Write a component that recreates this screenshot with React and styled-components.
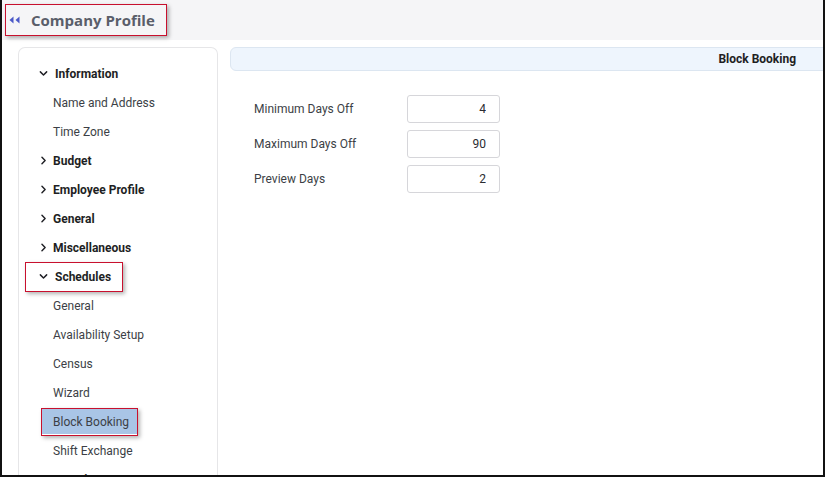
import React from 'react';
import styled, { createGlobalStyle, css } from 'styled-components';

const Global = createGlobalStyle`
  html, body { margin: 0; padding: 0; background: #fff; }
  body { font-family: Roboto, "Liberation Sans", Arial, sans-serif; }
`;

const Frame = styled.div`
  width: 825px;
  height: 477px;
  box-sizing: border-box;
  border-left: 2px solid #111;
  border-right: 2px solid #111;
  border-bottom: 2px solid #111;
  overflow: hidden;
  display: flex;
  flex-direction: column;
  background: #fff;
`;

const TopBar = styled.div`
  height: 40px;
  flex: none;
  background: #f5f5f7;
  display: flex;
  align-items: center;
  padding-left: 3px;
`;

const marked = css`
  position: relative;
  &::after {
    content: '';
    position: absolute;
    border: 1.5px solid #c8102e;
    box-shadow: 2px 2px 4px rgba(0, 0, 0, 0.3);
    pointer-events: none;
  }
`;

const TitleBox = styled.div`
  ${marked}
  display: flex;
  align-items: center;
  gap: 11px;
  height: 32px;
  padding: 0 12px 0 4px;
  &::after { inset: 0; }
`;

const Title = styled.h1`
  margin: 0;
  font-family: "Open Sans", "Liberation Sans", sans-serif;
  font-size: 15px;
  font-weight: 700;
  color: #5a5e6a;
  white-space: nowrap;
`;

const Body = styled.div`
  flex: 1;
  display: flex;
  gap: 12px;
  padding: 7px 0 0 16px;
  min-height: 0;
`;

const Sidebar = styled.nav`
  width: 200px;
  flex: none;
  border: 1px solid #e6e6e8;
  border-bottom: none;
  border-radius: 7px 7px 0 0;
  padding-top: 11px;
  box-sizing: border-box;
`;

const Row = styled.div`
  ${(p) => p.$marked && marked}
  height: 29px;
  display: flex;
  align-items: center;
  font-size: 12px;
  white-space: nowrap;
  box-sizing: border-box;
  color: ${(p) => (p.$group ? '#1e1f24' : '#3c3f46')};
  font-weight: ${(p) => (p.$group ? 700 : 400)};
  padding-left: ${(p) => (p.$group ? '20px' : '34px')};
  gap: ${(p) => (p.$open ? '7px' : '5px')};
  &::after {
    ${(p) => (p.$group
      ? 'left: 6px; width: 96px; top: 0; bottom: -1px;'
      : 'left: 22px; width: 95px; top: 1px; bottom: 0px;')}
  }
`;

const Highlight = styled.span`
  display: inline-flex;
  align-items: center;
  margin-left: -11px;
  padding: 0 11px;
  height: 25px;
  box-sizing: border-box;
  white-space: nowrap;
  ${(p) => p.$on && css`
    width: 95px;
    background: #a9c5e6;
  `}
`;

const Main = styled.section`
  width: 610px;
  flex: none;
`;

const PanelHead = styled.div`
  height: 24px;
  background: #eef5fd;
  border: 1px solid #dce6f1;
  border-radius: 6px 0 0 6px;
  display: flex;
  align-items: center;
  justify-content: flex-end;
  padding-right: 43px;
  box-sizing: border-box;
  font-size: 12px;
  font-weight: 700;
  color: #1e1f24;
`;

const Form = styled.div`
  padding: 24px 0 0 24px;
  display: grid;
  grid-template-columns: 153px 93px;
  row-gap: 7px;
  align-items: center;
`;

const Label = styled.label`
  font-size: 12px;
  color: #3c3f46;
`;

const Field = styled.input`
  width: 93px;
  height: 28px;
  box-sizing: border-box;
  border: 1px solid #d6d6da;
  border-radius: 3px;
  text-align: right;
  padding: 0 13px;
  font: 12px Roboto, "Liberation Sans", sans-serif;
  color: #2a2c31;
  background: #fff;
`;

const Chevron = ({ open }) => (
  <svg width="9" height="9" viewBox="0 0 10 10" fill="none" stroke="#1e1f24" strokeWidth="1.6" strokeLinecap="round" strokeLinejoin="round">
    {open ? <path d="M1.5 3.2 5 6.7 8.5 3.2" /> : <path d="M3.3 1.5 6.8 5 3.3 8.5" />}
  </svg>
);

const BackIcon = () => (
  <svg width="11" height="8" viewBox="0 0 11 8" fill="#4a58c8">
    <path d="M4.5 0.5 V7.5 L0.5 4 Z" />
    <path d="M10.5 0.5 V7.5 L6.5 4 Z" />
  </svg>
);

const nav = [
  { label: 'Information', group: true, open: true },
  { label: 'Name and Address' },
  { label: 'Time Zone' },
  { label: 'Budget', group: true },
  { label: 'Employee Profile', group: true },
  { label: 'General', group: true },
  { label: 'Miscellaneous', group: true },
  { label: 'Schedules', group: true, open: true, marked: true },
  { label: 'General' },
  { label: 'Availability Setup' },
  { label: 'Census' },
  { label: 'Wizard' },
  { label: 'Block Booking', active: true, marked: true },
  { label: 'Shift Exchange' },
  { label: 'Security', group: true },
];

const fields = [
  ['Minimum Days Off', '4'],
  ['Maximum Days Off', '90'],
  ['Preview Days', '2'],
];

export default function App() {
  return (
    <Frame>
      <Global />
      <TopBar>
        <TitleBox>
          <BackIcon />
          <Title>Company Profile</Title>
        </TitleBox>
      </TopBar>
      <Body>
        <Sidebar>
          {nav.map((item, i) => (
            <Row key={i} $group={item.group} $open={item.open} $marked={item.marked}>
              {item.group && <Chevron open={item.open} />}
              {item.group ? item.label : <Highlight $on={item.active}>{item.label}</Highlight>}
            </Row>
          ))}
        </Sidebar>
        <Main>
          <PanelHead>Block Booking</PanelHead>
          <Form>
            {fields.map(([label, value]) => (
              <React.Fragment key={label}>
                <Label>{label}</Label>
                <Field defaultValue={value} />
              </React.Fragment>
            ))}
          </Form>
        </Main>
      </Body>
    </Frame>
  );
}
